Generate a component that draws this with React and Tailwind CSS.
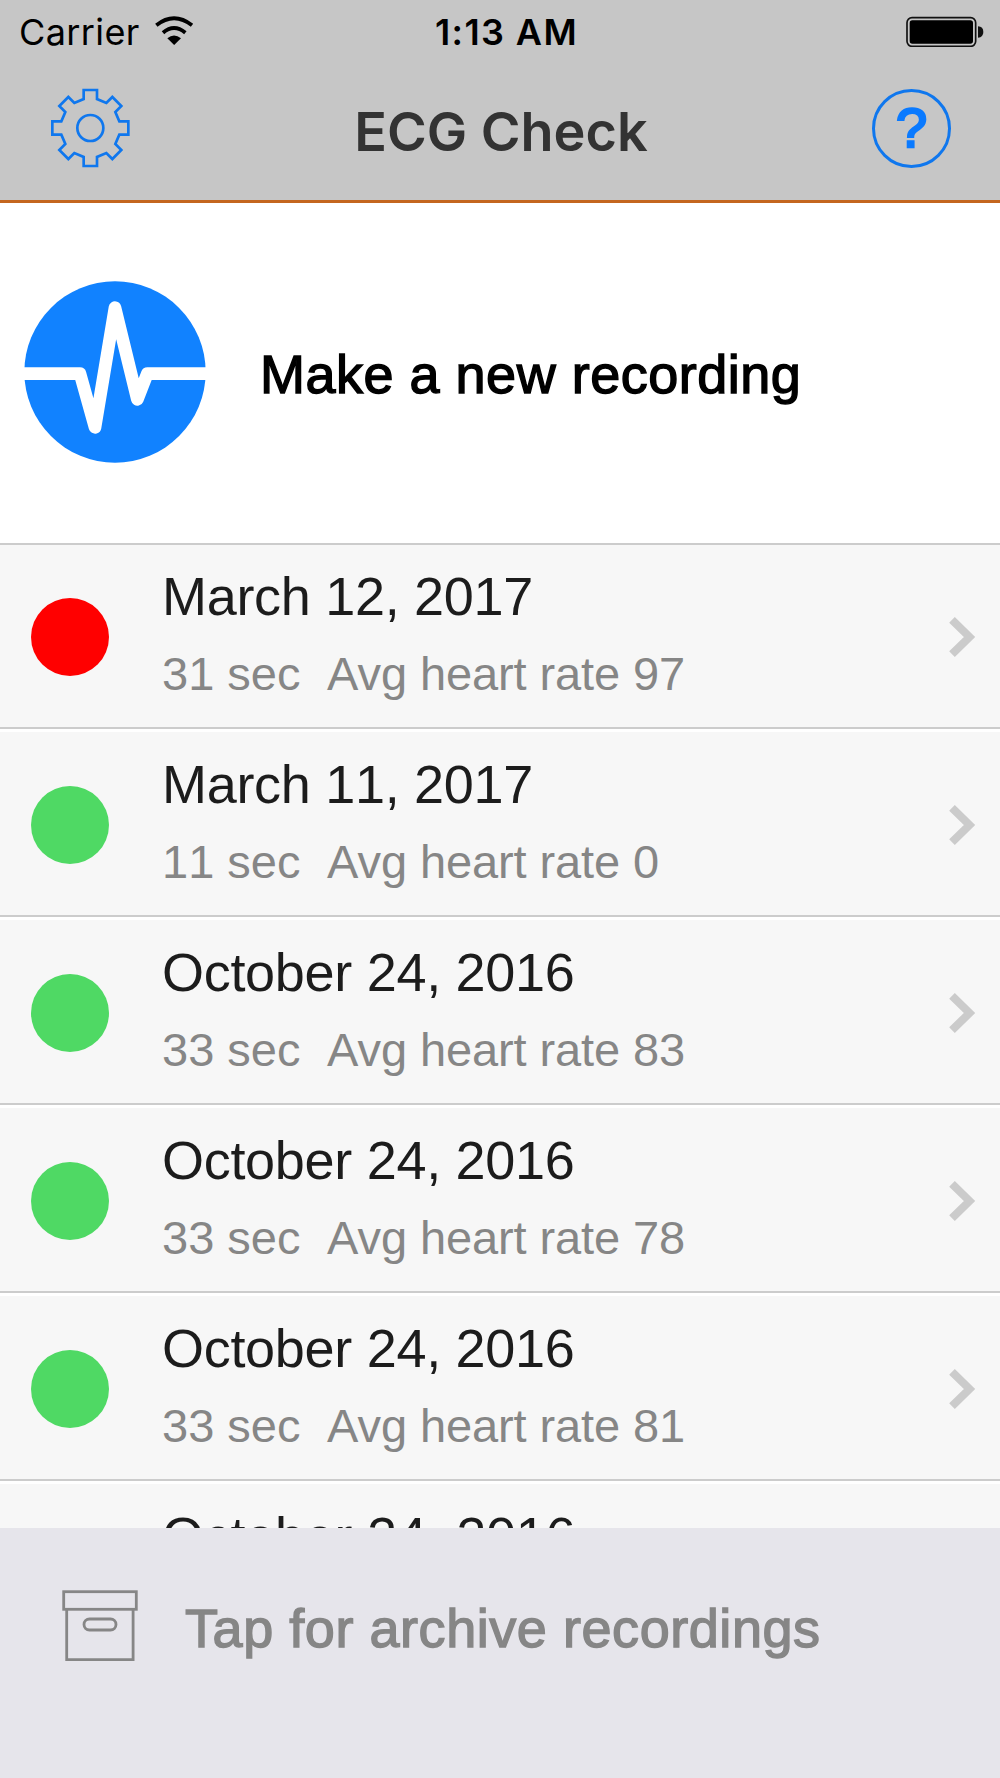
const recordings = [
  { date: "March 12, 2017", seconds: 31, rate: 97, dot: "bg-[#ff0000]" },
  { date: "March 11, 2017", seconds: 11, rate: 0, dot: "bg-[#4fd964]" },
  { date: "October 24, 2016", seconds: 33, rate: 83, dot: "bg-[#4fd964]" },
  { date: "October 24, 2016", seconds: 33, rate: 78, dot: "bg-[#4fd964]" },
  { date: "October 24, 2016", seconds: 33, rate: 81, dot: "bg-[#4fd964]" },
];

function WifiIcon() {
  return (
    <svg className="ml-[14px] mt-[16px] h-[30px] w-[40px]" viewBox="0 0 120 90" fill="none">
      <path d="M7 28 Q60 -14 114 28" stroke="#000" strokeWidth="11.5" />
      <path d="M27 50 Q60 22 94 50" stroke="#000" strokeWidth="11.5" />
      <path d="M40 67 Q60 50 81 67 L60.5 87 Z" fill="#000" />
    </svg>
  );
}

function BatteryIcon() {
  return (
    <svg className="h-[32px] w-[80px]" viewBox="0 0 240 96" fill="none">
      <rect x="6" y="8" width="206" height="86" rx="15" stroke="#111" strokeWidth="5" />
      <rect x="14" y="16" width="190" height="70" rx="8" fill="#000" />
      <path d="M219 34 Q235 35 235 51 Q235 67 219 68 Z" fill="#111" />
    </svg>
  );
}

function GearIcon() {
  return (
    <svg className="h-[80px] w-[80px]" viewBox="-121 -120 240 240" fill="none" stroke="#0f77ee" strokeWidth="8">
      <path d="M-20 -114H20V-87L48 -75L66 -93L93 -66L75 -48L87 -20H114V20H87L75 48L93 66L66 93L48 75L20 87V114H-20V87L-48 75L-66 93L-93 66L-75 48L-87 20H-114V-20H-87L-75 -48L-93 -66L-66 -93L-48 -75L-20 -87Z" />
      <circle r="39" />
    </svg>
  );
}

function PulseIcon() {
  return (
    <svg className="h-[182px] w-[182px] shrink-0" viewBox="0 0 546 546" fill="none">
      <circle cx="273" cy="273" r="272" fill="#1182ff" />
      <path d="M-5 278H168L213 439L273 80L340 355L370 278H551" stroke="#fff" strokeWidth="38" strokeLinejoin="round" />
    </svg>
  );
}

function ArchiveIcon() {
  return (
    <svg className="h-[72px] w-[76px] shrink-0" viewBox="0 0 76 72" fill="none" stroke="#868686" strokeWidth="2.8">
      <rect x="1.7" y="1.7" width="72.6" height="17.6" />
      <path d="M4.7 19.5V69.6H71.1V19.5" />
      <rect x="22" y="29" width="32" height="11" rx="5.5" />
    </svg>
  );
}

function Row({ item }) {
  return (
    <li className="flex h-[188px] shrink-0 items-center border-t-3 border-b-2 border-t-white border-b-[#cccccc] bg-[#f7f7f7] pl-[31px] pr-[24px] pt-[3px] first:-mt-[4px]">
      <span className={`h-[78px] w-[78px] shrink-0 rounded-full ${item.dot}`} />
      <div className="mb-[6px] ml-[53px] flex-1 whitespace-pre [font-kerning:none]">
        <div className="text-[54px] leading-[64px] tracking-[-0.3px] text-[#1c1c1c]">{item.date}</div>
        <div className="mt-[16px] text-[47px] leading-[60px] text-[#868686]">
          {item.seconds} sec{"  "}
          <span className="ml-[0.5px] tracking-[-0.1px] [font-kerning:normal]">Avg heart rate {item.rate}</span>
        </div>
      </div>
      <svg className="h-[42px] w-[28px]" viewBox="0 0 28 42" fill="none">
        <path d="M4 3.8L21.5 21L4 38.2" stroke="#cbcbcb" strokeWidth="8" />
      </svg>
    </li>
  );
}

export default function App() {
  return (
    <div className="flex h-[1778px] w-[1000px] flex-col overflow-hidden bg-white font-['Liberation_Sans',Arial,sans-serif]">
      <header className="h-[203px] shrink-0 border-b-3 border-[#c4661f] bg-[#c6c6c6] font-['Inter',sans-serif]">
        <div className="grid h-[64px] grid-cols-3">
          <div className="flex pl-[19px]">
            <span className="text-[36px] leading-[64px] tracking-[0.4px]">Carrier</span>
            <WifiIcon />
          </div>
          <div className="pl-[13px] text-center text-[36px] font-semibold leading-[64px] tracking-[1.4px]">1:13 AM</div>
          <div className="flex justify-end pr-[15px] pt-[15px]">
            <BatteryIcon />
          </div>
        </div>
        <div className="flex h-[128px] items-center justify-between pl-[50px] pr-[49px]">
          <GearIcon />
          <h1 className="mt-[8px] text-[54px] font-semibold leading-[64px] text-[#333333]">ECG Check</h1>
          <div className="flex h-[79px] w-[79px] items-center justify-center rounded-full border-3 border-[#0f77ee] font-['Liberation_Sans',sans-serif] text-[56px] leading-none text-[#0a7aff] [-webkit-text-stroke:2.5px_#0a7aff]">
            ?
          </div>
        </div>
      </header>

      <section className="flex h-[340px] shrink-0 items-center pb-[2px] pl-[24px]">
        <PulseIcon />
        <span className="ml-[54px] mt-[4px] text-[54px] leading-[64px] tracking-[0.5px] text-black [-webkit-text-stroke:1.4px_#000]">
          Make a new recording
        </span>
      </section>

      <ul className="flex h-[985px] shrink-0 flex-col overflow-hidden border-t-2 border-[#cccccc]">
        {recordings.map((item, i) => (
          <Row key={i} item={item} />
        ))}
        <li className="h-[47px] shrink-0 overflow-hidden border-t-3 border-white bg-[#f7f7f7] pl-[162px] pt-[20px] text-[54px] leading-[64px] tracking-[-0.25px] text-[#1c1c1c] [font-kerning:none]">
          October 24, 2016
        </li>
      </ul>

      <footer className="flex flex-1 items-start bg-[#e6e5eb] pl-[62px] pt-[62px]">
        <ArchiveIcon />
        <span className="ml-[47px] mt-[6px] text-[54px] leading-[64px] tracking-[0.55px] text-[#868686] [-webkit-text-stroke:1.4px_#868686]">
          Tap for archive recordings
        </span>
      </footer>
    </div>
  );
}
